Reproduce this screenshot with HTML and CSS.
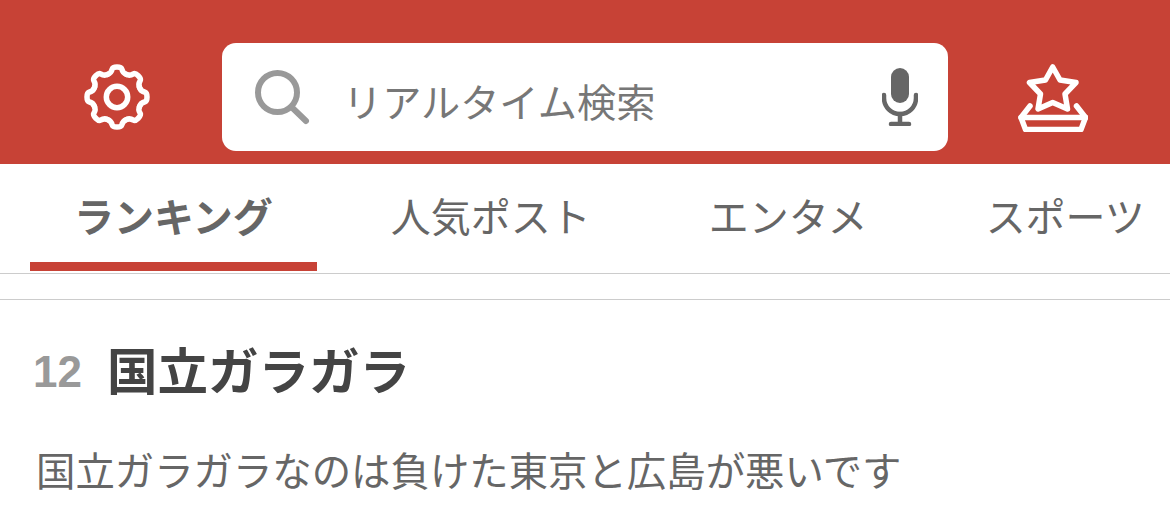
FILE: index.html
```html
<!DOCTYPE html>
<html lang="ja">
<head>
    <meta charset="UTF-8">
    <meta name="viewport" content="width=device-width, initial-scale=1.0">
    <title>リアルタイム検索</title>
    <link rel="stylesheet" href="styles.css">
</head>
<body>

    <header class="top-bar">
        <div class="slot slot-left">
            <svg class="icon-gear" viewBox="0 0 66 66" fill="none" stroke="#fff" stroke-width="5.5" stroke-linecap="round">
                <defs>
                    <path id="tooth" d="M23.6 10.4C26.5 9.5 27.5 8 28.2 5Q28.8 3 33 3Q37.2 3 37.8 5C38.5 8 39.5 9.5 42.4 10.4"/>
                </defs>
                <use href="#tooth"/>
                <use href="#tooth" transform="rotate(45 33 33)"/>
                <use href="#tooth" transform="rotate(90 33 33)"/>
                <use href="#tooth" transform="rotate(135 33 33)"/>
                <use href="#tooth" transform="rotate(180 33 33)"/>
                <use href="#tooth" transform="rotate(225 33 33)"/>
                <use href="#tooth" transform="rotate(270 33 33)"/>
                <use href="#tooth" transform="rotate(315 33 33)"/>
                <circle cx="33" cy="33" r="10.7"/>
            </svg>
        </div>

        <div class="search-box">
            <svg class="icon-search" viewBox="0 0 56 56" fill="none" stroke="#999" stroke-width="6" stroke-linecap="round">
                <circle cx="23.5" cy="23.5" r="19.5"/>
                <path d="M37.5 38L52 52"/>
            </svg>
            <span class="search-text">リアルタイム検索</span>
            <svg class="icon-mic" viewBox="0 0 36 58" fill="none" stroke="#666" stroke-width="4.5" stroke-linecap="round">
                <rect x="9" y="0" width="18" height="35" rx="9" fill="#666" stroke="none"/>
                <path d="M2 27V30A16 16 0 0 0 34 30V27"/>
                <path d="M18 46V56M9 56H27"/>
            </svg>
        </div>

        <div class="slot slot-right">
            <svg class="icon-star" viewBox="0 0 70 70" fill="none" stroke="#fff" stroke-width="5.5" stroke-linejoin="round" stroke-linecap="round">
                <path d="M34.7 5L42 18L58 20.5L47 32L49.5 47L34.7 40.5L20 47L22.5 32L11.5 20.5L27.5 18Z"/>
                <path d="M12 44L3 55.5L7.5 67.5H63L67.5 55.5L58.5 44"/>
                <path d="M3 55.5H67.5"/>
            </svg>
        </div>
    </header>

    <nav class="tabs">
        <a class="tab active">ランキング</a>
        <a class="tab">人気ポスト</a>
        <a class="tab">エンタメ</a>
        <a class="tab">スポーツ</a>
    </nav>

    <main class="post">
        <div class="post-head">
            <span class="rank">12</span>
            <h1 class="post-title">国立ガラガラ</h1>
        </div>
        <p class="post-text">国立ガラガラなのは負けた東京と広島が悪いです</p>
    </main>

</body>
</html>
```

FILE: styles.css
```css
html {
    height: 100%;
    overflow: hidden;
}

body {
    margin: 0;
    background-color: #fff;
    font-family: "Noto Sans CJK JP", "Noto Sans", sans-serif;
    color: #666;
}

/* --- header --- */
.top-bar {
    display: flex;
    align-items: center;
    height: 164px;
    padding: 43px 0 13px;
    box-sizing: border-box;
    background-color: #c74236;
}

.slot {
    display: flex;
    justify-content: center;
    width: 222px;
    box-sizing: border-box;
}

.slot-left { padding-left: 12px; }
.slot-right { padding-right: 12px; }

.icon-gear {
    width: 66px;
    height: 66px;
}

.icon-star {
    width: 70px;
    height: 70px;
}

.search-box {
    display: flex;
    align-items: center;
    width: 726px;
    height: 108px;
    padding: 0 30px 0 32px;
    box-sizing: border-box;
    background-color: #fff;
    border-radius: 14px;
}

.icon-search {
    width: 56px;
    height: 56px;
    margin-right: 33px;
}

.search-text {
    padding-top: 6px;
    font-size: 39.2px;
    color: #777;
}

.icon-mic {
    width: 36px;
    height: 58px;
    margin-left: auto;
}

/* --- tabs --- */
.tabs {
    display: flex;
    gap: 30px;
    height: 110px;
    padding: 0 0 2px 30px;
    box-sizing: border-box;
    border-bottom: 1px solid #ccc;
    overflow: hidden;
}

.tab {
    flex: none;
    padding: 22px 44px 0;
    box-sizing: border-box;
    font-size: 40px;
    line-height: 58px;
    white-space: nowrap;
}

.tab.active {
    font-weight: bold;
    border-bottom: 9px solid #c74236;
}

/* --- post --- */
.post {
    margin-top: 25px;
    padding: 0 33px;
    border-top: 1px solid #ccc;
}

.post-head {
    display: flex;
    align-items: center;
    gap: 25px;
    margin-top: 34px;
}

.rank {
    padding-top: 8px;
    font-family: "Liberation Sans", sans-serif;
    font-size: 44px;
    font-weight: bold;
    line-height: 60px;
    color: #999;
}

.post-title {
    margin: 0;
    font-size: 50.5px;
    font-weight: bold;
    line-height: 64px;
    color: #444;
}

.post-text {
    margin: 38px 0 0 3px;
    font-size: 39.4px;
    line-height: 58px;
}
```
